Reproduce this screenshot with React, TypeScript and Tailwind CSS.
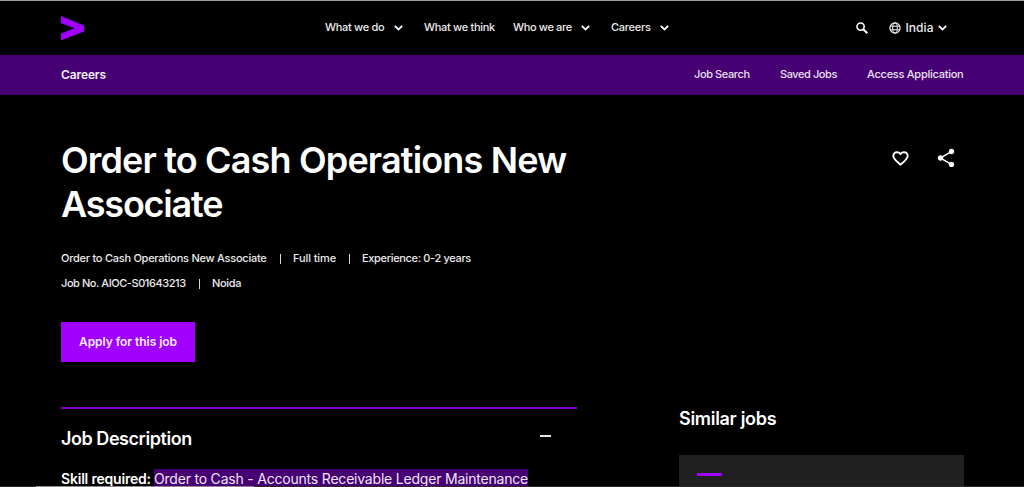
import { MdShare } from "react-icons/md";

const subLinks = [
    { label: "Job Search", style: "w-[56px] tracking-[-0.4px]" },
    { label: "Saved Jobs", style: "w-[57px] tracking-[-0.42px]" },
    { label: "Access Application", style: "w-[96px] tracking-[-0.26px]" },
];

export default function App() {
    return (
        <div className="relative h-[487px] w-[1024px] overflow-hidden bg-black font-['Inter',sans-serif] text-white">
            {/* HEADER */}
            <header className="flex h-[55px] items-center border-t border-[#9a9a9a] pl-[61px] text-[11px] font-medium whitespace-nowrap text-[#ececec]">
                <svg width="23" height="25" viewBox="0 0 23 25" fill="#a100ff">
                    <path d="M0 0v7.2l13.6 5.1L0 17.4v7.2l23-9.2V9.4z" />
                </svg>

                <nav className="mb-px ml-[241px] flex items-center">
                    <span className="w-[60px] tracking-[-0.29px]">What we do</span>
                    <Chevron className="ml-[9px]" />
                    <span className="ml-[21px] w-[71px] tracking-[-0.3px]">What we think</span>
                    <span className="ml-[18px] w-[59px] tracking-[-0.35px]">Who we are</span>
                    <Chevron className="ml-[9px]" />
                    <span className="ml-[21px] w-[40px] tracking-[-0.25px]">Careers</span>
                    <Chevron className="ml-[9px]" />
                </nav>

                <SearchIcon />
                <button className="ml-[21px] flex items-center">
                    <Globe />
                    <span className="ml-[4px] w-[29px] text-xs tracking-[0.05px]">India</span>
                    <Chevron className="ml-[4px]" />
                </button>
            </header>

            {/* CAREERS BAR */}
            <div className="flex h-10 items-center justify-between bg-[#460073] pr-[61px] pl-[61px] whitespace-nowrap">
                <span className="text-xs font-semibold tracking-[-0.11px] text-[#f3ecf7]">Careers</span>
                <div className="mb-px flex gap-[30px] text-[11px] font-medium text-[#eae0f0]">
                    {subLinks.map((link) => (
                        <a key={link.label} className={link.style}>
                            {link.label}
                        </a>
                    ))}
                </div>
            </div>

            <main className="pr-[60px] pl-[61px]">
                {/* JOB TITLE */}
                <section className="flex justify-between pt-[43px]">
                    <h1 className="w-[516px] text-[36px] leading-[44px] font-semibold tracking-[-0.84px]">
                        Order to Cash Operations New{" "}
                        <span className="tracking-[-1.2px]">Associate</span>
                    </h1>
                    <div className="flex h-[40px] items-center gap-[26px] pr-[7px]">
                        <HeartIcon />
                        <MdShare size={22} />
                    </div>
                </section>

                <div className="mt-5 text-[11px] leading-[25px] font-medium whitespace-nowrap text-[#ececec]">
                    <div className="flex items-center">
                        <span className="w-[206px] tracking-[-0.25px]">
                            Order to Cash Operations New Associate
                        </span>
                        <Divider />
                        <span className="w-[43px] tracking-[-0.1px]">Full time</span>
                        <Divider />
                        <span className="tracking-[-0.34px]">Experience: 0-2 years</span>
                    </div>
                    <div className="flex items-center">
                        <span className="w-[125px] tracking-[-0.44px]">Job No. AIOC-S01643213</span>
                        <Divider />
                        <span className="tracking-[-0.3px]">Noida</span>
                    </div>
                </div>

                <button className="mt-[26px] flex h-10 w-[134px] items-center justify-center bg-[#a100ff] text-xs font-semibold tracking-[-0.04px] text-[#f8ecff]">
                    Apply for this job
                </button>

                <div className="mt-[45px] flex justify-between">
                    {/* DESCRIPTION */}
                    <section className="w-[516px] border-t-2 border-[#8400d1]">
                        <div className="flex h-[60px] items-center justify-between pr-[26px]">
                            <h2 className="mb-px text-lg font-semibold tracking-[-0.45px]">Job Description</h2>
                            <span className="mb-1.5 h-[2px] w-[11px] bg-[#e6e6e6]" />
                        </div>
                        <p className="flex text-sm leading-5 whitespace-nowrap">
                            <b className="w-[93px] font-semibold tracking-[-0.2px]">Skill required:</b>
                            <span className="h-[22px] w-[374px] bg-[#460073] tracking-[-0.205px] text-[#eee6f3]">
                                Order to Cash - Accounts Receivable Ledger Maintenance
                            </span>
                        </p>
                    </section>

                    {/* SIMILAR JOBS */}
                    <aside className="w-[285px]">
                        <h2 className="text-lg leading-6 font-semibold tracking-[-0.3px]">Similar jobs</h2>
                        <div className="mt-6 h-10 bg-[#202020] pt-[18px] pl-[18px]">
                            <div className="h-[3px] w-[25px] bg-[#a100ff]" />
                        </div>
                    </aside>
                </div>
            </main>

            {/* BOTTOM EDGE */}
            <div className="absolute bottom-0 left-0 flex h-px w-full bg-[#2a2a2a]">
                <div className="ml-9 w-[218px] bg-[#8c8c8c]" />
            </div>
        </div>
    );
}

function Divider() {
    return (
        <span className="flex w-[26px] justify-center">
            <span className="h-[10px] w-px bg-[#d8d8d8]" />
        </span>
    );
}

function Chevron({ className }: { className: string }) {
    return (
        <svg className={className} width="9" height="6" viewBox="0 0 9 6" fill="none" stroke="#fff" strokeWidth="1.8">
            <path d="M.8 .9l3.7 3.6L8.2 .9" />
        </svg>
    );
}

function SearchIcon() {
    return (
        <svg className="ml-[187px]" width="12" height="12" viewBox="0 0 12 12" fill="none" stroke="#fff">
            <circle cx="4.6" cy="4.6" r="3.6" strokeWidth="1.6" />
            <path d="M7.2 7.2l4.1 4.1" strokeWidth="2" />
        </svg>
    );
}

function HeartIcon() {
    return (
        <svg width="17" height="15" viewBox="0 0 17 15" fill="none" stroke="#fff" strokeWidth="1.9">
            <path d="M8.5 13.6C4 9.7 1.3 7.7 1.3 4.9 1.3 2.8 2.9 1.2 5 1.2c1.4 0 2.7.7 3.5 1.8C9.300 1.900 10.600 1.200 12 1.200c2.100 0 3.700 1.600 3.700 3.700 0 2.800-2.700 4.800-7.200 8.700z" />
        </svg>
    );
}

function Globe() {
    return (
        <svg width="12" height="12" viewBox="0 0 12 12" fill="none" stroke="#f0f0f0">
            <circle cx="6" cy="6" r="5.1" strokeWidth="1.2" />
            <ellipse cx="6" cy="6" rx="2.3" ry="5.1" />
            <path d="M1.4 4.2h9.2M1.4 7.8h9.2" />
        </svg>
    );
}
